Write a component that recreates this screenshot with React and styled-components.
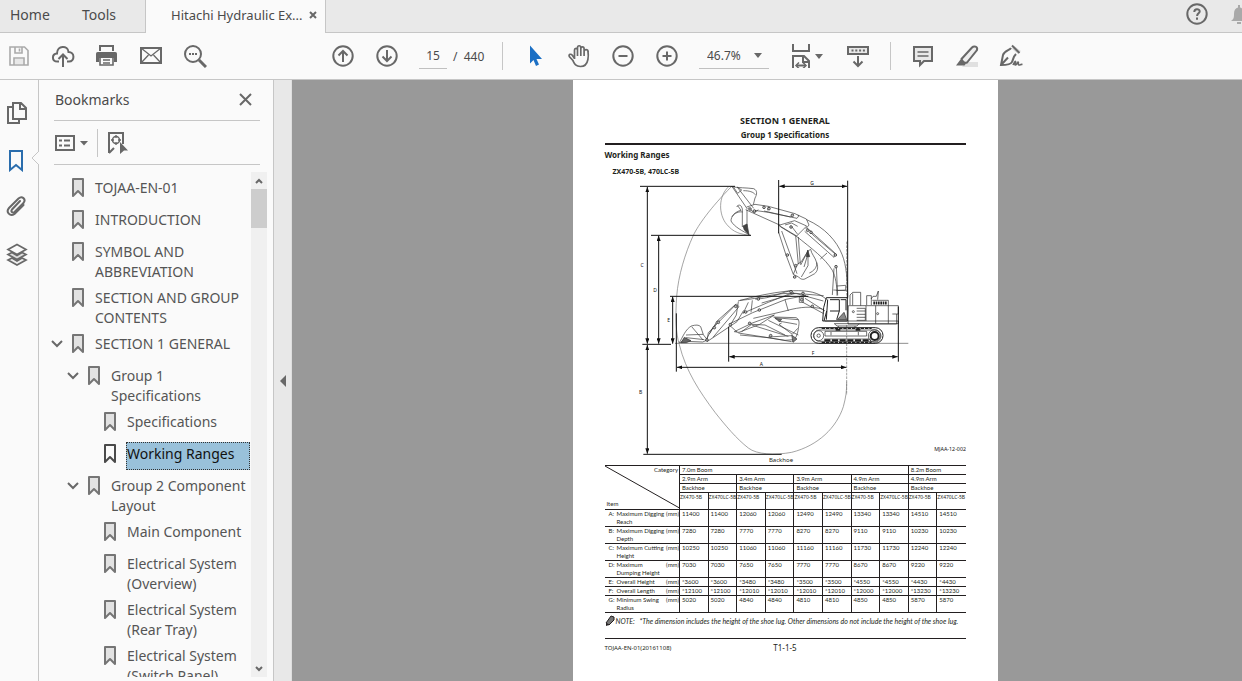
import React from 'react';
import styled, { createGlobalStyle } from 'styled-components';

const GlobalStyle = createGlobalStyle`
  * {
    box-sizing: border-box;
  }

  body {
    margin: 0;
    overflow: hidden;
    font-family: 'Noto Sans', 'Open Sans', sans-serif;
    color: #4b4b4b;
  }

  button,
  input,
  select {
    font: inherit;
    color: inherit;
  }
`;

const Window = styled.div`
  display: flex;
  flex-direction: column;
  height: 100vh;
  background: #fafafa;
`;

const TabBar = styled.header`
  display: flex;
  flex: none;
  height: 33px;
  background: #e9e9e9;
`;

const TabButton = styled.button`
  width: ${props => props.$width};
  padding: 0 0 4px 10px;
  border: 0;
  border-bottom: 1px solid #c6c6c6;
  background: none;
  font-size: 14px;
  text-align: left;
`;

const ActiveTab = styled.div`
  display: flex;
  align-items: center;
  gap: 6px;
  padding: 0 8px 3px 25px;
  border: solid #c6c6c6;
  border-width: 0 1px;
  background: #fafafa;
  font-size: 13px;
  white-space: nowrap;
`;

const PlainButton = styled.button`
  display: flex;
  align-items: center;
  justify-content: center;
  flex: none;
  padding: 0;
  border: 0;
  background: none;
  color: ${props => props.$color || '#686868'};
`;

const TabBarEnd = styled.div`
  display: flex;
  flex: 1;
  justify-content: flex-end;
  gap: 18px;
  padding-bottom: 4px;
  border-bottom: 1px solid #c6c6c6;
  overflow: hidden;

  button:last-child {
    margin-right: -9px;
  }
`;

const ToolBar = styled.div`
  display: flex;
  align-items: center;
  flex: none;
  gap: 20px;
  height: 47px;
  padding-left: 7px;
  border-bottom: 1px solid #c6c6c6;
  font-size: 12px;
`;

const ToolGroup = styled.div`
  display: flex;
  align-items: center;
  gap: ${props => props.$gap || '20px'};
  margin-left: ${props => props.$offset || 0};
`;

const PageInput = styled.input`
  width: 28px;
  height: 26px;
  padding: 0;
  border: 0;
  border-bottom: 1px solid #c0c0c0;
  background: none;
  text-align: center;
`;

const PageCount = styled.span`
  width: 29px;
  white-space: pre;
`;

const Divider = styled.span`
  width: 1px;
  height: ${props => props.$height || '28px'};
  background: #c6c6c6;
`;

const ZoomField = styled.label`
  display: flex;
  align-items: center;
  width: 70px;
  height: 26px;
  border-bottom: 1px solid #c0c0c0;
`;

const ZoomSelect = styled.select`
  flex: 1;
  min-width: 0;
  padding: 0 0 0 8px;
  border: 0;
  appearance: none;
  background: none;
`;

const Caret = styled.span`
  width: 0;
  margin-right: ${props => props.$end || 0};
  border: 4px solid transparent;
  border-top: 5px solid #686868;
  border-bottom: 0;
`;

const Body = styled.div`
  display: flex;
  flex: 1;
  min-height: 0;
`;

const Rail = styled.nav`
  position: relative;
  display: flex;
  flex-direction: column;
  align-items: center;
  flex: none;
  gap: 22px;
  width: 39px;
  padding: 20px 4px 0 0;
  border-right: 1px solid #c6c6c6;
`;

const RailButton = styled(PlainButton)`
  width: 24px;
  height: 25px;
`;

const RailNotch = styled.svg`
  position: absolute;
  top: 70px;
  right: -1px;
`;

const Panel = styled.aside`
  display: flex;
  flex-direction: column;
  flex: none;
  width: 235px;
  border-right: 1px solid #c6c6c6;
`;

const PanelHeader = styled.div`
  display: flex;
  align-items: center;
  justify-content: space-between;
  flex: none;
  height: 41px;
  margin: 0 13px 0 15px;
  padding: 0 8px 2px 1px;
  border-bottom: 1px solid #c6c6c6;
`;

const PanelTitle = styled.h2`
  margin: 0;
  font-size: 14px;
  font-weight: normal;
`;

const PanelTools = styled.div`
  display: flex;
  align-items: center;
  flex: none;
  gap: 8px;
  height: 44px;
  margin: 0 13px 0 15px;
  border-bottom: 1px solid #c6c6c6;
`;

const ListArea = styled.div`
  display: flex;
  flex: 1;
  min-height: 0;
  margin: 7px 6px 4px 10px;
`;

const List = styled.ul`
  flex: 1;
  margin: 0;
  padding: 4px 1px 0 0;
  overflow: hidden;
  list-style: none;
`;

const Item = styled.li`
  display: flex;
  align-items: flex-start;
  padding: 0 0 4px ${props => props.$level * 16}px;
`;

const Toggle = styled(PlainButton)`
  width: 16px;
  height: 24px;
`;

const ItemIcon = styled.svg`
  flex: none;
  width: 12px;
  height: 20px;
  margin: 2px 10px 0 7px;
`;

const ItemLink = styled.a`
  flex: 1;
  min-height: 28px;
  padding: ${props => (props.$selected ? '1px 0 0' : '2px 1px 0')};
  border: ${props => (props.$selected ? '1px dotted #333' : '0')};
  background: ${props => (props.$selected ? '#99c1da' : 'none')};
  color: ${props => (props.$selected ? '#111' : '#555')};
  font-size: 14px;
  line-height: 20px;
  text-decoration: none;
`;

const ScrollTrack = styled.div`
  display: flex;
  flex-direction: column;
  width: 16px;
  background: #f0f0f0;
`;

const ScrollThumb = styled.div`
  flex: none;
  height: 39px;
  margin-bottom: auto;
  background: #cdcdcd;
`;

const ScrollButton = styled(PlainButton)`
  height: 17px;
`;

const Collapse = styled(PlainButton)`
  width: 18px;
  border-right: 1px solid #dedede;
  background: #e8e8e8;
`;

const Viewer = styled.main`
  display: flex;
  align-items: flex-start;
  justify-content: center;
  flex: 1;
  padding-left: 36px;
  background: #999;
  overflow: hidden;
`;

const Sheet = styled.article`
  width: 425px;
  min-height: 600px;
  padding: 34px 32px 24px;
  background: #fff;
  color: #231f20;
  font-family: 'Noto Sans', sans-serif;
`;

const SheetHead = styled.header`
  padding-bottom: 1px;
  border-bottom: 2px solid #231f20;
  text-align: center;

  h1,
  h2 {
    margin: 0;
    font-size: 9px;
    line-height: 13px;
  }

  h2 {
    font-size: 8px;
    line-height: 15px;
  }
`;

const Heading = styled.h3`
  margin: 0;
  padding-left: ${props => props.$indent || 0};
  font-size: ${props => props.$size};
  line-height: ${props => props.$line};
`;

const Figure = styled.figure`
  margin: 0;

  svg {
    display: block;
    width: 100%;
  }

  figcaption {
    padding-right: 8px;
    font-size: 6px;
    line-height: 9px;
    text-align: center;
  }
`;

const SpecTable = styled.table`
  width: 100%;
  border-collapse: collapse;
  table-layout: fixed;
  font-family: Lato, sans-serif;
  font-size: 6px;
  line-height: 8px;

  col:first-child {
    width: 75px;
  }

  tr {
    height: 9px;
  }

  tr.tall {
    height: 17px;
  }

  th,
  td {
    padding: 0 0 0 2px;
    border: 1px solid #231f20;
    font-weight: normal;
    text-align: left;
    vertical-align: top;
    white-space: nowrap;
  }

  th:first-child {
    border-left: 0;
  }

  tr > :last-child {
    border-right: 0;
  }

  th.model {
    padding: 0;
    border-left: 1px solid #231f20;
    font-family: 'Noto Sans', sans-serif;
    font-size: 5px;
  }

  th.corner {
    padding: 0;
  }
`;

const Corner = styled.div`
  position: relative;
  display: flex;
  flex-direction: column;
  justify-content: space-between;
  height: 42px;
  padding-left: 2px;

  span:first-child {
    align-self: flex-end;
    padding-right: 1px;
  }
`;

const Diagonal = styled.svg`
  position: absolute;
  top: 0;
  left: 0;
  width: 100%;
  height: 100%;
`;

const RowLabel = styled.div`
  display: grid;
  grid-template-columns: 8px 1fr auto;
  padding-left: 2px;
`;

const RowName = styled.span`
  white-space: normal;
`;

const Note = styled.p`
  display: flex;
  align-items: center;
  margin: 0;
  padding-bottom: 9px;
  border-bottom: 1px solid #231f20;
  font-family: Lato, sans-serif;
  font-size: 7px;
  font-style: italic;
  line-height: 16px;
  white-space: nowrap;

  span {
    width: 24px;
    margin-left: 1px;
  }
`;

const SheetFoot = styled.footer`
  display: grid;
  grid-template-columns: 1fr auto 1fr;
  align-items: center;
  font-size: 6px;
  line-height: 18px;

  strong {
    font-size: 8px;
    font-weight: normal;
  }
`;

const Icon = ({ children, size = 24, sw = 2 }) => (
  <svg
    width={size}
    height={size}
    viewBox={`0 0 ${size} ${size}`}
    fill="none"
    stroke="currentColor"
    strokeWidth={sw}
    aria-hidden="true"
  >
    {children}
  </svg>
);

const Tool = ({ label, color, children }) => (
  <PlainButton aria-label={label} title={label} $color={color}>
    <Icon>{children}</Icon>
  </PlainButton>
);

const BookmarkIcon = ({ active }) => (
  <ItemIcon viewBox="0 0 12 20" aria-hidden="true">
    <path
      d="M1 1h10v17l-5-5-5 5z"
      fill={active ? '#fafafa' : '#e2e2e2'}
      stroke={active ? '#4a4a4a' : '#757575'}
      strokeWidth="2"
      strokeLinejoin="round"
    />
  </ItemIcon>
);

const bookmarks = [
  { level: 0, text: 'TOJAA-EN-01' },
  { level: 0, text: 'INTRODUCTION' },
  { level: 0, text: 'SYMBOL AND ABBREVIATION' },
  { level: 0, text: 'SECTION AND GROUP CONTENTS' },
  { level: 0, text: 'SECTION 1 GENERAL', open: true },
  { level: 1, text: 'Group 1 Specifications', open: true },
  { level: 2, text: 'Specifications' },
  { level: 2, text: 'Working Ranges', selected: true },
  { level: 1, text: 'Group 2 Component Layout', open: true },
  { level: 2, text: 'Main Component' },
  { level: 2, text: 'Electrical System (Overview)' },
  { level: 2, text: 'Electrical System (Rear Tray)' },
  { level: 2, text: 'Electrical System (Switch Panel)' },
];

const arms = ['2.9m Arm', '3.4m Arm', '3.9m Arm', '4.9m Arm', '4.9m Arm'];

const specs = [
  { id: 'A', name: 'Maximum Digging Reach', tall: true, values: ['11400', '12060', '12490', '13340', '14510'] },
  { id: 'B', name: 'Maximum Digging Depth', tall: true, values: ['7280', '7770', '8270', '9110', '10230'] },
  { id: 'C', name: 'Maximum Cutting Height', tall: true, values: ['10250', '11060', '11160', '11730', '12240'] },
  { id: 'D', name: 'Maximum Dumping Height', tall: true, values: ['7030', '7650', '7770', '8670', '9220'] },
  { id: 'E', name: 'Overall Height', values: ['*3600', '*3480', '*3500', '*4550', '*4430'] },
  { id: 'F', name: 'Overall Length', values: ['*12100', '*12010', '*12010', '*12000', '*13230'] },
  { id: 'G', name: 'Minimum Swing Radius', tall: true, values: ['5020', '4840', '4810', '4850', '5870'] },
];

const Tabs = () => (
  <TabBar>
    <TabButton $width="72px">Home</TabButton>
    <TabButton $width="73px">Tools</TabButton>
    <ActiveTab>
      Hitachi Hydraulic Ex...
      <PlainButton aria-label="Close tab">
        <Icon size={8}><path d="M1 1l6 6M7 1L1 7" /></Icon>
      </PlainButton>
    </ActiveTab>
    <TabBarEnd>
      <Tool label="Help">
        <circle cx="12" cy="12" r="9.7" />
        <path d="M9.3 10c0-3.8 5.4-3.6 5.4-.6 0 2-2.6 2-2.6 4.6M12 15.5v2.2" />
      </Tool>
      <Tool label="Notifications" color="#a9a9a9">
        <path d="M4 19c3-2 3-4 3-7 0-4 1.500-6 4-6.500V3h2v2.500c2.500.5 4 2.500 4 6.500 0 3 0 5 3 7z" fill="currentColor" stroke="none" />
        <path d="M10 21h4" />
      </Tool>
    </TabBarEnd>
  </TabBar>
);

const Tools = () => (
  <ToolBar>
    <ToolGroup>
      <Tool label="Save" color="#aaa">
        <path d="M3 3h14.500l3.500 3.500V21H3zM8 3v6h7V3M12.500 4.500v3M7 21v-7h10v7" strokeWidth="1.600" />
        <path d="M8 15h8v5H8z" fill="#e8e8e8" stroke="none" />
      </Tool>
      <Tool label="Upload">
        <path d="M8 17.500H6.500C.500 17.500.500 10 6 9.500 6 1 17 1 17.500 8c6.500 0 6.500 9.500.5 9.500H16M12 23V11M7.500 15L12 10.500l4.500 4.500" />
      </Tool>
      <Tool label="Print">
        <path d="M5 7V2h13v5" />
        <path d="M3 8h17c2 0 2 1 2 3v7h-3v-4H4v4H1v-7c0-2 0-3 2-3z" fill="currentColor" stroke="none" />
        <path d="M5 13v8h13v-8M8 16h7M8 19h7" strokeWidth="1.600" />
      </Tool>
      <Tool label="Mail">
        <path d="M2 4h20v15H2z" />
        <path d="M2 4l10 8 10-8M2 19l7.500-8M22 19l-7.500-8" strokeWidth="1.300" />
      </Tool>
      <Tool label="Search">
        <circle cx="10" cy="10" r="8" />
        <path d="M6 10h2M9 10h2M12 10h2" strokeWidth="2" />
        <path d="M16 16l7 7" strokeWidth="3" />
      </Tool>
    </ToolGroup>
    <ToolGroup $offset="104px">
      <Tool label="Previous page">
        <circle cx="12" cy="12" r="9.700" />
        <path d="M12 18V7M7.500 11.500L12 7l4.500 4.500" />
      </Tool>
      <Tool label="Next page">
        <circle cx="12" cy="12" r="9.700" />
        <path d="M12 6v11M7.500 12.500L12 17l4.500-4.500" />
      </Tool>
      <ToolGroup $gap="6px">
        <PageInput aria-label="Page" defaultValue="15" />
        <PageCount>/  440</PageCount>
      </ToolGroup>
    </ToolGroup>
    <Divider />
    <Tool label="Select" color="#1b6fc4">
      <path d="M7 1.500v18l3.500-3.500 2.500 6 3-1.500-2.500-5.500h5.500z" fill="currentColor" stroke="none" />
    </Tool>
    <Tool label="Hand">
      <path
        d="M7.500 15V6c0-2.200 3-2.200 3 0V4c0-3 3.300-3 3.300 0v1c0-2.800 3.300-2.800 3.300 0v2.500c0-2.500 3.900-2.500 3.900 0 .5 3 .5 5-.1 8-.8 4.500-2.900 7-7.500 7-5 0-6-3-7.500-6L2.300 12.500c-1-2.300 1.700-3 3-1.200L7.500 14.500M10.500 5v7M13.800 4v8M17.100 5v7"
        strokeWidth="1.700"
      />
    </Tool>
    <Tool label="Zoom out">
      <circle cx="12" cy="12" r="9.700" />
      <path d="M7.500 12h9" />
    </Tool>
    <Tool label="Zoom in">
      <circle cx="12" cy="12" r="9.700" />
      <path d="M7.500 12h9M12 7.500v9" />
    </Tool>
    <ZoomField>
      <ZoomSelect aria-label="Zoom level">
        <option>46.7%</option>
      </ZoomSelect>
      <Caret $end="7px" />
    </ZoomField>
    <ToolGroup $gap="2px">
      <Tool label="Fit width">
        <path d="M4 0v7h16V0M4 24V12h11l5 5v7M14 12v6h6M7.500 21.500h9" />
        <path d="M10 18.500l-3 3 3 3M14 18.500l3 3-3 3" strokeWidth="1.500" />
      </Tool>
      <Caret $end="3px" />
    </ToolGroup>
    <Tool label="Scroll mode">
      <path d="M2 3h20v7H2z" fill="#e8e8e8" />
      <path d="M5.500 6.500h13.500" strokeDasharray="2 1.800" />
      <path d="M12 12v10M7.500 17.500L12 22l4.500-4.500" />
    </Tool>
    <Divider />
    <Tool label="Comment">
      <path d="M3 3h18v14h-8l-4 4v-4H3z" fill="#e8e8e8" />
      <path d="M6.500 8h11M6.500 12h11" strokeWidth="1.500" />
    </Tool>
    <Tool label="Highlight">
      <path d="M11 18h12v5H7z" fill="#e0e0e0" stroke="none" />
      <path d="M6.500 15L17 3.500c2-2 6-1 5 2.500L12 18.500c-2 1-5-1-5.500-3.500z" fill="#eee" />
      <path d="M5.500 15.500l5.500 4-1.500 2H1z" fill="currentColor" stroke="none" />
    </Tool>
    <Tool label="Sign">
      <path d="M15 2l7 5-3 3-6-5z" fill="#ddd" stroke="none" />
      <path d="M13 1.500l7.500 7.500M12 4c-1 2-7 3-8 7L2 21c5 0 10-.5 11-3 1.500-3 1-5 4-8M2.500 20.500L9 13.500" />
      <path d="M14 21c1-2 2-4 2.500-3.500s-1.500 3.500 0 3.500 1.500-3 2.500-3-.5 3 1 3 1.500-1 3.500-.5" strokeWidth="1.600" />
    </Tool>
  </ToolBar>
);

const SideRail = () => (
  <Rail>
    <RailButton aria-label="Page thumbnails">
      <Icon>
        <path d="M8 2h8l5 5v11H8zM15 2v6h6M8 6H3v16h11v-4" />
      </Icon>
    </RailButton>
    <RailButton aria-label="Bookmarks" $color="#2a6dad">
      <Icon><path d="M5 3h12v19l-6-5-6 5z" /></Icon>
    </RailButton>
    <RailButton aria-label="Attachments">
      <Icon>
        <path d="M15 6L7 14.500c-1.500 2 .5 4 2.500 2.500L18.500 8c3-4-1.500-7.500-5-4.500L4 13c-3.500 4 1 9 5.500 6l9-9" strokeLinecap="round" />
      </Icon>
    </RailButton>
    <RailButton aria-label="Layers">
      <Icon sw={1.7}>
        <path d="M3 18l9 5 9-5-4-2-5 3-5-3z" fill="#eee" />
        <path d="M3 12.500l9 5 9-5-4-2-5 3-5-3z" fill="#ddd" />
        <path d="M12 2.500l9 5-9 5-9-5z" fill="#fafafa" />
      </Icon>
    </RailButton>
    <RailNotch width="8" height="16" viewBox="0 0 8 16">
      <path d="M8 1L1 8l7 7" fill="#fafafa" stroke="#c6c6c6" />
    </RailNotch>
  </Rail>
);

const BookmarkPanel = () => (
  <Panel>
    <PanelHeader>
      <PanelTitle>Bookmarks</PanelTitle>
      <PlainButton aria-label="Close panel">
        <Icon size={13}><path d="M1 1l11 11M12 1L1 12" /></Icon>
      </PlainButton>
    </PanelHeader>
    <PanelTools>
      <PlainButton aria-label="Options">
        <svg width="21" height="18" fill="none" stroke="currentColor" strokeWidth="2">
          <path d="M2 2h18v14H2zM10 6.500h6M10 11.500h6M5 6.500h3M5 11.500h3" />
        </svg>
        <svg width="14" height="18"><path d="M5 7h8l-4 4.500z" fill="currentColor" /></svg>
      </PlainButton>
      <Divider />
      <PlainButton aria-label="Find current bookmark">
        <Icon>
          <path d="M3 22V2h14v11M3 22l5-5" />
          <circle cx="10" cy="9" r="3.500" strokeWidth="1.500" />
          <path d="M10 4v3M10 11v3M5 9h3M12 9h3" strokeWidth="1.300" />
          <path d="M14 11l8 8.500h-4L14 23z" fill="currentColor" stroke="none" />
        </Icon>
      </PlainButton>
    </PanelTools>
    <ListArea>
      <List>
        {bookmarks.map((item, i) => (
          <Item key={i} $level={item.level}>
            <Toggle as={item.open ? 'button' : 'span'} aria-label={item.open ? 'Collapse' : undefined}>
              {item.open && (
                <svg width="12" height="8" fill="none" stroke="currentColor" strokeWidth="2">
                  <path d="M1 1l5 5 5-5" />
                </svg>
              )}
            </Toggle>
            <BookmarkIcon active={item.selected} />
            <ItemLink href="#" $selected={item.selected}>{item.text}</ItemLink>
          </Item>
        ))}
      </List>
      <ScrollTrack>
        <ScrollButton aria-label="Scroll up">
          <svg width="8" height="6" fill="none" stroke="currentColor" strokeWidth="2"><path d="M1 5l3-3 3 3" /></svg>
        </ScrollButton>
        <ScrollThumb />
        <ScrollButton aria-label="Scroll down">
          <svg width="8" height="6" fill="none" stroke="currentColor" strokeWidth="2"><path d="M1 1l3 3 3-3" /></svg>
        </ScrollButton>
      </ScrollTrack>
    </ListArea>
  </Panel>
);

// Dimension line with an arrow head at both ends
const Dimension = ({ x1, y1, x2, y2 }) => (
  <line
    x1={x1}
    y1={y1}
    x2={x2}
    y2={y2}
    stroke="#111"
    strokeWidth="3"
    markerStart="url(#arrow)"
    markerEnd="url(#arrow)"
  />
);

const Excavator = () => (
  <svg viewBox="-60 9 1083 834" fill="none" stroke="#333" strokeWidth="2" role="img" aria-label="Working ranges">
    <defs>
      <marker id="arrow" viewBox="0 0 16 12" refX="16" refY="6" markerWidth="16" markerHeight="12" markerUnits="userSpaceOnUse" orient="auto-start-reverse">
        <path d="M0 0l16 6-16 6z" fill="#111" stroke="none" />
      </marker>
    </defs>

    {/* reach envelope */}
    <g stroke="#777">
      <path d="M320 34C255 100 220 150 205 181c-25 55-45 120-50 183-4 60-3 110 8 145 20 80 60 140 107 203 30 38 65 80 100 107 25 20 80 22 130 13 80-20 135-75 155-137 8-30 10-45 10-75" />
      <path d="M150 505h700" strokeWidth="2.500" />
      <path d="M665 200v170M665 450v210" strokeDasharray="8 3" />
      <path d="M310 36c-30 28-30 82-5 112 20 24 40 30 72 33" />
    </g>

    {/* raised bucket, tipped and level */}
    <path d="M320 35c20 4 44 3 66 6 12 5 10 18 4 28l-5 20M322 36l45 66M338 38l48 62M326 37l12 18 12-10-14-9M355 47c18 0 30 4 36 12" />
    <path d="M338 92l10 14c-18 4-30 18-30 32 10 18 35 30 56 42M352 100v56M366 104v50M335 96c4-8 14-8 16 4M321 125c8-12 22-16 32-14" />
    <path d="M354 153l12-6 6 32-14-14z" fill="#444" />
    <path d="M365 96l25-8 40 6 80 22 12 6-6 8-86-18-42-6M362 104l104 47M370 98l18 16 12-10M430 94l-2 12M518 120l26 12 8 18-10 12M505 118l-8 8-80-18" />

    {/* raised arm and hanging bucket */}
    <path d="M461 151l48-14 36 16-30 30zM466 155l46 28M461 172l22 68 22 58M470 168l24 66 22 62M512 182l8 86M520 186l6 82M498 152l20 26M480 150l20-6 18 10" />
    <path d="M505 298l12-30 12-8 20-32 8-5c2 14 14 24 18 40 6 16 2 26-6 33l-26 14c-8 6-18 2-22-4zM527 270l22-42M549 228v44l-20 34M549 236l-12 40M575 262c2 14-8 26-22 32" />
    <path d="M544 245l4-20 6 20z" fill="#444" />

    {/* raised boom */}
    <path d="M545 134c55 24 90 64 106 104 14 34 16 78 17 128M512 182c50 40 88 68 110 104 10 20 14 44 14 76M545 158l86 77-4 12-88-78M554 166l10 14 70 60M586 252l20-18M634 275l4 86M627 280l-5 80M636 333l26-2v14l-28 2M625 345l40 2" />

    {/* lowered boom and arm, two positions */}
    <path d="M339 378c50-14 95-24 150-30 45-3 80 0 106 18l12 8M345 376c60-4 110-26 170-20l80 22M355 414l75-32 70-28 96 8M385 430l95-22c50-14 80-14 112-6M390 372c50 0 90-26 110-24l8 8-98 28M313 447l70-34 100-40 60-12M340 380l-6 40-18 30M480 374l10 34M382 376l-4 36M523 366h12v16h-12zM530 380l66 36M540 370l60 38" />
    <path d="M246 497l4-24 84-86 8 8-78 92M246 500l90-60 20-34M254 476l20-34M272 442l60-54M241 498l20-36 22-26M328 470l54-26 66-24-44 28-62 24zM313 450l24 22M370 382l-16 34" />

    {/* buckets on the ground */}
    <path d="M163 503c10-16 18-40 36-50 14-4 22-4 28 2l8 24 12 16-14 6-48-2zM183 480l52-2M200 455l34 40M168 502l16-14 54 6M172 497l14-6" />
    <path d="M168 503l10-16 20 10-14 6z" fill="#666" />
    <path d="M445 426l68 2c10 4 10 14 8 26-2 18-6 36-20 46M430 436l90 44M448 428l72 6M460 438l56 10M470 444l-8 4 40 30 16-18M340 474l140 22 26-2M345 480l85 8 70 12M350 470l30-22 40 2 60 30M380 450l110 34M430 486l70-4" />
    <path d="M450 430l20 3-6 7zM500 480l16 12-12 10z" fill="#777" />

    {/* joints */}
    <g fill="#bbb" stroke="#222">
      {[
        [375, 102], [388, 108], [417, 97], [432, 101], [502, 121], [498, 156], [548, 166], [558, 172], [487, 240],
        [512, 272], [509, 306], [631, 240], [633, 275], [316, 449], [362, 411], [374, 445], [403, 405], [400, 372],
        [498, 350], [534, 355], [562, 394], [246, 495], [268, 458], [280, 442], [332, 394], [437, 482], [530, 374],
      ].map(([cx, cy]) => <circle key={`${cx}-${cy}`} cx={cx} cy={cy} r="4" />)}
    </g>

    {/* cab, engine deck and counterweight */}
    <g stroke="#222">
      <path d="M604 368h63v70h-74l3-40zM608 374l-4 60M615 374h28v34l-8 26M647 374h16v32M615 408h28M597 438l8-30" strokeWidth="3" />
      <path d="M637 434l20-22 8 22z" fill="#888" />
      <path d="M670 392h150v25h-5v30h-146zM695 400h26v36h-26M695 408h26M695 418h26M695 427h26M723 392v46M752 392v54M790 392v54M675 390v-30l8-8h24v40M683 355v36M725 390v-28h14v28M738 372l6-8h10l6-16-2 26M742 376h48v16M802 417h13" />
      <circle cx="758" cy="416" r="3" />
      <circle cx="685" cy="410" r="3" />
      <path d="M600 438h220v8H628M628 446l8 7h60l6-7M640 453v5M690 453v5" />
      <path d="M745 384h42" strokeWidth="9" strokeDasharray="5 2" />
    </g>

    {/* tracks */}
    <g stroke="#222">
      <rect x="558" y="458" width="216" height="47" rx="23" strokeWidth="3" />
      <rect x="566" y="465" width="200" height="34" rx="17" />
      <path d="M590 460h150M590 502h150" strokeDasharray="10 3" strokeWidth="4" />
      <path d="M600 469h125v14H600zM598 492h136M618 471v10M700 471v10" />
      <path d="M598 496h140" strokeWidth="7" strokeDasharray="18 5" />
      <path d="M632 464h14M692 464h14" strokeWidth="6" />
      <circle cx="581" cy="482" r="15" />
      <circle cx="581" cy="482" r="5" />
      <circle cx="749" cy="483" r="12" strokeWidth="6" />
      <circle cx="749" cy="483" r="19" />
    </g>

    {/* dimensions */}
    <g stroke="#111" strokeWidth="3">
      <path d="M45 34h285M78 181h300M135 364h415M52 508h86M55 838h415" />
      <path d="M461 15v160M668 17v353M154 415v175M311 455v105M820 395v165" />
    </g>
    <Dimension x1="67" y1="36" x2="67" y2="506" />
    <Dimension x1="101" y1="182" x2="101" y2="506" />
    <Dimension x1="143" y1="365" x2="143" y2="506" />
    <Dimension x1="67" y1="510" x2="67" y2="836" />
    <Dimension x1="463" y1="34" x2="666" y2="34" />
    <Dimension x1="156" y1="577" x2="664" y2="577" />
    <Dimension x1="313" y1="545" x2="818" y2="545" />
    <g fill="#111" stroke="none" fontSize="15" textAnchor="middle">
      <text x="51" y="277">C</text>
      <text x="90" y="352">D</text>
      <text x="131" y="441">E</text>
      <text x="47" y="658">B</text>
      <text x="561" y="29">G</text>
      <text x="564" y="539">F</text>
      <text x="409" y="572">A</text>
    </g>
    <text x="1023" y="827" fill="#111" stroke="none" fontSize="16" textAnchor="end">MJAA-12-002</text>
  </svg>
);

const Specifications = () => (
  <SpecTable>
    <colgroup>
      <col />
      {[...Array(10)].map((_, i) => <col key={i} />)}
    </colgroup>
    <thead>
      <tr>
        <th className="corner" rowSpan={4}>
          <Corner>
            <span>Category</span>
            <span>Item</span>
            <Diagonal viewBox="0 0 75 42" preserveAspectRatio="none" aria-hidden="true">
              <path d="M0 0l75 42" stroke="#231f20" />
            </Diagonal>
          </Corner>
        </th>
        <th colSpan={8}>7.0m Boom</th>
        <th colSpan={2}>8.2m Boom</th>
      </tr>
      <tr>{arms.map((arm, i) => <th key={i} colSpan={2}>{arm}</th>)}</tr>
      <tr>{arms.map((arm, i) => <th key={i} colSpan={2}>Backhoe</th>)}</tr>
      <tr className="tall">
        {arms.map((arm, i) => (
          <React.Fragment key={i}>
            <th className="model">ZX470-5B</th>
            <th className="model">ZX470LC-5B</th>
          </React.Fragment>
        ))}
      </tr>
    </thead>
    <tbody>
      {specs.map((row) => (
        <tr key={row.id} className={row.tall ? 'tall' : undefined}>
          <th>
            <RowLabel>
              <span>{row.id}:</span>
              <RowName>{row.name}</RowName>
              <span>(mm)</span>
            </RowLabel>
          </th>
          {row.values.map((value, i) => (
            <React.Fragment key={i}>
              <td>{value}</td>
              <td>{value}</td>
            </React.Fragment>
          ))}
        </tr>
      ))}
    </tbody>
  </SpecTable>
);

const DocumentPage = () => (
  <Sheet>
    <SheetHead>
      <h1>SECTION 1 GENERAL</h1>
      <h2>Group 1 Specifications</h2>
    </SheetHead>
    <Heading $size="8px" $line="20px">Working Ranges</Heading>
    <Heading as="h4" $size="7px" $line="13px" $indent="8px">ZX470-5B, 470LC-5B</Heading>
    <Figure>
      <Excavator />
      <figcaption>Backhoe</figcaption>
    </Figure>
    <Specifications />
    <Note>
      <svg width="10" height="12" viewBox="0 0 10 12">
        <path d="M1 8l5-7 3 1v3L4 10z" fill="#777" stroke="#231f20" />
        <path d="M1 8l3 2-3 1z" fill="#231f20" />
      </svg>
      <span>NOTE:</span>
      *The dimension includes the height of the shoe lug. Other dimensions do not include the height of the shoe lug.
    </Note>
    <SheetFoot>
      <span>TOJAA-EN-01(20161108)</span>
      <strong>T1-1-5</strong>
    </SheetFoot>
  </Sheet>
);

const App = () => (
  <Window>
    <GlobalStyle />
    <Tabs />
    <Tools />
    <Body>
      <SideRail />
      <BookmarkPanel />
      <Collapse aria-label="Collapse panel">
        <svg width="7" height="12"><path d="M7 0v12L1 6z" fill="currentColor" /></svg>
      </Collapse>
      <Viewer>
        <DocumentPage />
      </Viewer>
    </Body>
  </Window>
);

export default App;
